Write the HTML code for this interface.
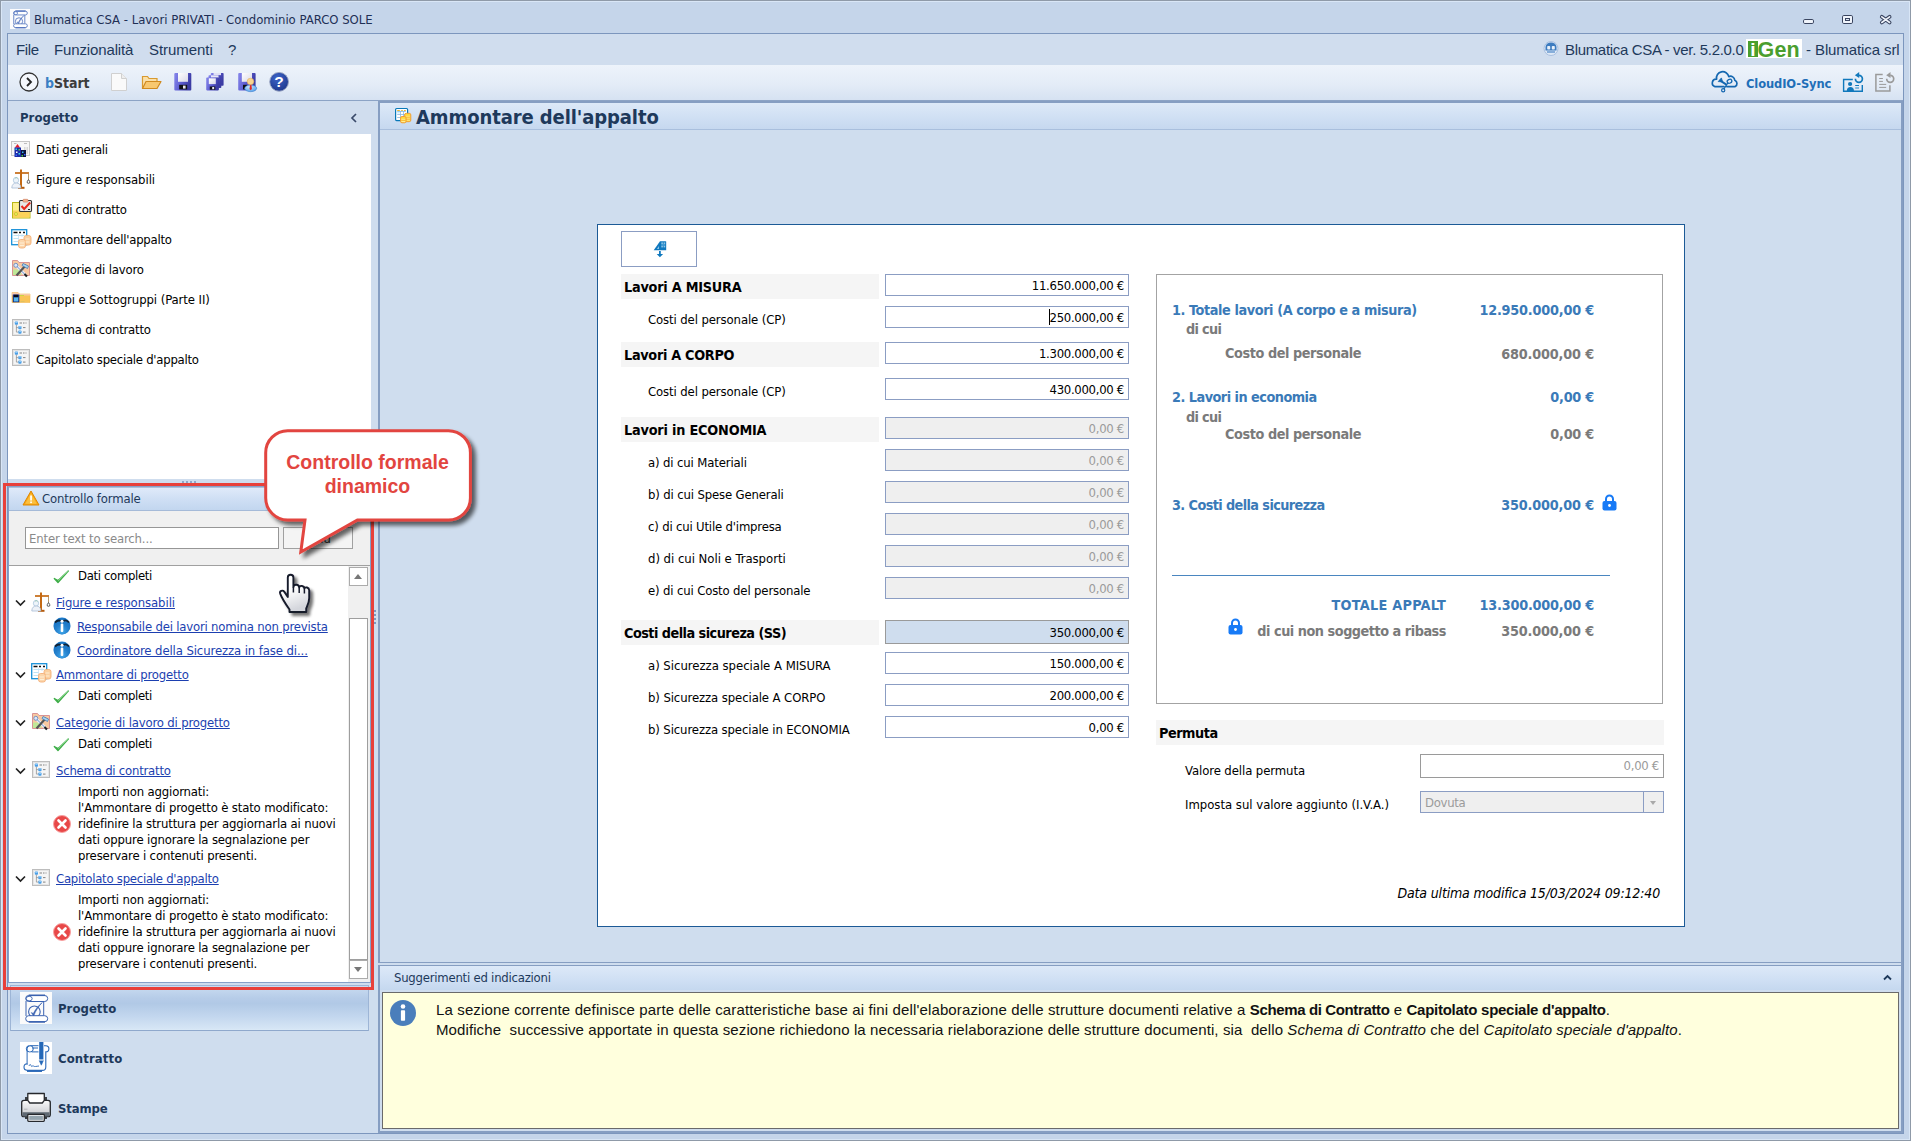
<!DOCTYPE html>
<html lang="it">
<head>
<meta charset="utf-8">
<title>Blumatica CSA - Lavori PRIVATI - Condominio PARCO SOLE</title>
<style>
*{box-sizing:border-box;margin:0;padding:0}
svg{overflow:visible}
html,body{width:1911px;height:1141px;overflow:hidden}
body{position:relative;background:#c5d5ea;font-family:"DejaVu Sans Condensed","Liberation Sans",sans-serif;font-size:13px;color:#000;line-height:16px}
.a{position:absolute}
.t{position:absolute;white-space:nowrap;line-height:16px;margin-top:1px}
.navy{color:#1e395b}
.b{font-weight:bold}
/* window */
#win{left:0;top:0;width:1911px;height:1141px;border:1px solid #8f9aa8;background:#c5d5ea;box-shadow:inset 0 0 0 1px #d9e6f6}
#frame{left:7px;top:33px;width:1897px;height:1101px;border:1px solid #7c96bd;background:#cfddee}
#menubar{left:8px;top:34px;width:1895px;height:31px;background:#d0ddee}
#toolbar{left:8px;top:65px;width:1895px;height:35px;background:linear-gradient(#edf3fb,#e4ecf7 55%,#d6e2f2)}
#tbline{left:8px;top:100px;width:1895px;height:1px;background:#8ca3c5}
.menu{font-family:"Liberation Sans","DejaVu Sans",sans-serif;font-size:15px;color:#1e395b;line-height:18px}
/* left */
#lhead{left:8px;top:101px;width:363px;height:33px;background:#d0ddee}
#llist{left:8px;top:134px;width:363px;height:345px;background:#fff}
.li{position:absolute;left:36px;white-space:nowrap;line-height:16px;margin-top:1px}
/* main */
#mainborder{left:378px;top:101px;width:1525px;height:862px;border:1px solid #869ec2;border-top-width:2px;border-left-width:2px;border-right-width:2px;background:#cfddee}
#mhead{left:380px;top:103px;width:1521px;height:27px;background:linear-gradient(#dde9f8,#cfdff3 60%,#c6d8ef);border-bottom:1px solid #a9bfdd}
#form{left:597px;top:224px;width:1088px;height:703px;background:#fff;border:1px solid #1c5a96}
.lb{position:absolute;background:#f5f5f5;height:25px}
.inp{position:absolute;left:885px;width:244px;height:22px;border:1px solid #8b9dc3;background:#fff;text-align:right;padding-right:4px;line-height:21px;font-size:13px;letter-spacing:-0.3px;white-space:nowrap}
.inp.dis{background:#efefef;color:#9b9b9b}
.hl{font-family:"DejaVu Sans Condensed","Liberation Sans",sans-serif;font-weight:bold;font-size:14.3px;left:624px}
.sl{left:648px}
.sum{font-family:"DejaVu Sans Condensed","Liberation Sans",sans-serif;font-weight:bold;font-size:14.3px;line-height:18px;margin-top:0}
.blue{color:#3a7ab8}
.gr{color:#7a7a7a}
.r{text-align:right}
.nv{font-size:13px}
.hn{font-family:"Liberation Sans","DejaVu Sans",sans-serif;font-size:15px;line-height:20px;color:#111}
/* tree */
.lnk{color:#1c3fb0;text-decoration:underline}
</style>
</head>
<body>
<div class="a" id="win"></div>
<div class="a" id="frame"></div>
<div class="a" id="menubar"></div>
<div class="a" id="toolbar"></div>
<div class="a" id="tbline"></div>

<!-- TITLEBAR -->
<div id="titlebar">
<div class="t" style="left:34px;top:11px;color:#1e2f55;letter-spacing:-0.010px/*f*/">Blumatica CSA - Lavori PRIVATI - Condominio PARCO SOLE</div>
</div>

<!-- MENUBAR -->
<div id="menus">
<div class="t menu" style="left:16px;top:40px;letter-spacing:-0.343px/*f*/">File</div>
<div class="t menu" style="left:54px;top:40px;letter-spacing:-0.133px/*f*/">Funzionalità</div>
<div class="t menu" style="left:149px;top:40px;letter-spacing:-0.056px/*f*/">Strumenti</div>
<div class="t menu" style="left:228px;top:40px;letter-spacing:-1.744px/*f*/">?</div>
</div>

<!-- TOOLBAR -->
<div id="tools">
<!-- title icon -->
<div class="a" style="left:10px;top:9px;width:20px;height:20px;background:#fbfbfd"></div>
<svg class="a" style="left:10px;top:9px" width="20" height="20" viewBox="20 992 32 32" fill="none" stroke="#5878c0" stroke-width="1.400"><path d="M26 1001v15M43.700 1001.500v14"/><circle cx="34.400" cy="1011.800" r="5.800"/><rect x="25.700" y="995.500" width="22" height="6" rx="3" fill="#fff"/><path d="M28.700 995.300h16.300" stroke-width="2.200"/><ellipse cx="29.200" cy="998.600" rx="3" ry="2.300" stroke-width="1.200"/><rect x="25.700" y="1015.700" width="22" height="6" rx="3" fill="#fff"/><path d="M28.700 1021.900h16.300" stroke-width="2.200"/><path d="M31.300 1012.600l2.300 3.400c2-5 5-10 8.700-13.500c-4 3-7 7-9 11z" fill="#5878c0" stroke-width="0.800"/></svg>
<!-- window buttons -->
<div class="a" style="left:1803px;top:19px;width:11px;height:5px;border:1.300px solid #3a4560;border-radius:1.800px;background:#f0f4fb"></div>
<div class="a" style="left:1842px;top:15px;width:11px;height:9px;border:1.300px solid #3a4560;border-radius:1.800px;background:#f0f4fb"></div>
<div class="a" style="left:1845px;top:18px;width:5px;height:3px;border:1px solid #3a4560;background:#dfe7f4"></div>
<svg class="a" style="left:1879px;top:14px" width="14" height="12" viewBox="1879 14 14 12"><path d="M1881.800 16.800l7.800 5.700M1889.600 16.800l-7.800 5.700" stroke="#3a4560" stroke-width="3.800" stroke-linecap="round"/><path d="M1881.800 16.800l7.800 5.700M1889.600 16.800l-7.800 5.700" stroke="#f0f4fb" stroke-width="1.600" stroke-linecap="round"/></svg>
<!-- right of menubar -->
<svg class="a" style="left:1543px;top:41px" width="16" height="15" viewBox="0 0 16 15"><circle cx="8" cy="7.500" r="7" fill="#dfe9f6" stroke="#a9c0e0"/><path d="M2.500 6a5.500 4.500 0 0 1 11 0v3.500h-11z" fill="#3d7cc0"/><rect x="4.200" y="5" width="3" height="3.500" rx="0.800" fill="#e8f0fa"/><rect x="8.800" y="5" width="3" height="3.500" rx="0.800" fill="#e8f0fa"/><path d="M4 11h8" stroke="#6a9ad0" stroke-width="1.500"/></svg>
<div class="t menu" style="left:1565px;top:40px;letter-spacing:-0.328px/*f*/">Blumatica CSA - ver. 5.2.0.0</div>
<div class="a" style="left:1746px;top:39px;width:56px;height:19px;background:#fff"></div>
<div class="a" style="left:1748px;top:41px;width:9.500px;height:16px;background:#4a9e2e"></div>
<div class="t" style="left:1750.300px;top:38px;margin-top:0;font-family:'Liberation Sans',sans-serif;font-weight:bold;font-size:19px;line-height:24px;color:#fff">i</div>
<div class="t" style="left:1757.500px;top:38px;margin-top:0;font-family:'Liberation Sans',sans-serif;font-weight:bold;font-size:21.500px;line-height:24px;color:#4a9e2e;letter-spacing:0.2px">Gen</div>
<div class="t menu" style="left:1806px;top:40px;letter-spacing:-0.095px/*f*/">- Blumatica srl</div>
<!-- toolbar left -->
<svg class="a" style="left:19px;top:72px" width="20" height="20" viewBox="0 0 20 20"><circle cx="10" cy="10" r="9" fill="#f4f7fc" stroke="#333" stroke-width="1.300"/><path d="M8 6l4 4-4 4" fill="none" stroke="#222" stroke-width="1.800"/></svg>
<div class="t b" style="left:45px;top:72px;font-size:14px;line-height:20px;color:#3c3c3c;letter-spacing:-0.05px"><span style="color:#3a7fc4">b</span>Start</div>
<svg class="a" style="left:110px;top:72px" width="18" height="20" viewBox="0 0 18 20"><path d="M1.500 1.500h10l5 5v12h-15z" fill="#fafafa" stroke="#d0d0d0"/><path d="M11.500 1.500v5h5" fill="#eee" stroke="#d0d0d0"/></svg>
<svg class="a" style="left:141px;top:73px" width="21" height="18" viewBox="0 0 21 18"><path d="M1.500 15.500V3.500h5l1.500 2h8v3" fill="#fbe0a8" stroke="#d89a30" stroke-width="1.200"/><path d="M1.500 15.500l3.500-7h15l-4 7z" fill="#f8c870" stroke="#d08a20" stroke-width="1.200" stroke-linejoin="round"/></svg>

<svg class="a" style="left:170px;top:68px" width="124" height="28" viewBox="170 68 124 28"><defs><linearGradient id="dk" x1="0" y1="0" x2="1" y2="0.300"><stop offset="0" stop-color="#8888ec"/><stop offset="0.550" stop-color="#5c5cd0"/><stop offset="1" stop-color="#3c3ca4"/></linearGradient><linearGradient id="lb" x1="0" y1="0" x2="1" y2="1"><stop offset="0" stop-color="#fff"/><stop offset="1" stop-color="#d8d8e8"/></linearGradient><radialGradient id="hp" cx="0.400" cy="0.300" r="0.800"><stop offset="0" stop-color="#3c64c8"/><stop offset="1" stop-color="#1c3488"/></radialGradient><radialGradient id="pb" cx="0.400" cy="0.300" r="0.800"><stop offset="0" stop-color="#c8e8ff"/><stop offset="1" stop-color="#4898e8"/></radialGradient></defs>
<rect x="174.300" y="73" width="17" height="17.400" rx="1" fill="url(#dk)"/><rect x="178" y="73" width="10" height="8.800" fill="url(#lb)"/><rect x="179.200" y="84.800" width="8" height="4.600" fill="#101018"/><rect x="183" y="85.600" width="2.600" height="3" fill="#e8e8f0"/>
<rect x="210.800" y="73" width="12.800" height="12.800" rx="0.800" fill="url(#dk)"/><rect x="213.500" y="73" width="7.500" height="2.500" fill="#e0e0f4"/><rect x="208.500" y="75.300" width="12.800" height="12.800" rx="0.800" fill="url(#dk)"/><rect x="211" y="75.300" width="7.500" height="2.500" fill="#e8e8f8"/><rect x="206.200" y="77.600" width="12.700" height="12.800" rx="0.800" fill="url(#dk)"/><rect x="208.800" y="78.300" width="7" height="5.800" fill="url(#lb)"/><rect x="209.800" y="86.500" width="5.500" height="3.200" fill="#101018"/><rect x="212.200" y="87" width="2" height="2.200" fill="#e8e8f0"/>
<rect x="238.200" y="73" width="17.400" height="17.400" rx="1" fill="url(#dk)"/><rect x="241.800" y="73" width="10.200" height="8.800" fill="url(#lb)"/><rect x="243" y="84.800" width="4" height="4.600" fill="#101018"/><ellipse cx="250.700" cy="88.300" rx="6" ry="3.400" fill="url(#pb)" stroke="#3878c8" stroke-width="0.500"/><path d="M250 84.800h1.400l0.500 4.200-1.200 1.200-1.200-1.200z" fill="#e02828"/><circle cx="250.500" cy="81.500" r="3.300" fill="#f8d490" stroke="#e0a850" stroke-width="0.500"/>
<circle cx="279.100" cy="81.800" r="9.400" fill="url(#hp)" stroke="#98a4c0" stroke-width="0.900"/><text x="279.100" y="87.300" font-family="Liberation Sans, sans-serif" font-weight="bold" font-size="15.500" text-anchor="middle" fill="#fff">?</text></svg>
<!-- toolbar right -->
<svg class="a" style="left:1706px;top:68px" width="36" height="28" viewBox="1706 68 36 28"><g fill="none" stroke="#1467b0" stroke-linecap="round" stroke-linejoin="round"><path d="M1724 86.600H1715a3.800 3.800 0 0 1 1.600-7.400a6.200 6.200 0 0 1 12.200-2.600a4.300 4.300 0 0 1 6 3.600a3.600 3.600 0 0 1 0.400 6.400H1726.800" stroke-width="1.700"/><path d="M1720.300 80.600l5.700 3.800" stroke-width="1.900"/><ellipse cx="1729.500" cy="81.300" rx="2.400" ry="1.900" transform="rotate(-25 1729.500 81.300)" stroke-width="1.300"/><path d="M1727.800 83l-3.800 5.800" stroke-width="1.200"/><circle cx="1723.200" cy="90.200" r="1.600" stroke-width="1.200"/></g><path d="M1718.200 81.600l3.200-3.700 1.200 3.900z" fill="#1467b0" stroke="#1467b0" stroke-width="0.800" stroke-linejoin="round"/></svg>
<div class="t b" style="left:1746px;top:75px;font-family:'DejaVu Sans','Liberation Sans',sans-serif;font-size:11.500px;color:#1f6fb8;letter-spacing:-0.103px/*f*/">CloudIO-Sync</div>
<svg class="a" style="left:1840px;top:68px" width="60" height="28" viewBox="1840 68 60 28"><g fill="none" stroke="#1078bc"><path d="M1852.800 79.500H1843.600V91.300H1862.300V85" stroke-width="1.400"/><path d="M1855.200 85.500h3.800" stroke-width="1"/><path d="M1855.200 88h3.800" stroke-width="1.400" stroke="#5aa4d4"/><path d="M1858.900 75.300a3.500 3.500 0 1 1-3.500 3.500" stroke-width="1.700"/></g><g fill="#1078bc"><circle cx="1850.100" cy="84" r="2.100"/><path d="M1846.800 91.300c0-3 1.400-4.300 3.600-4.300s3.600 1.300 3.600 4.300z"/><path d="M1854.900 75.200l4.300-3.300v6.200z"/></g>
<g fill="none" stroke="#9a9a9a"><path d="M1882.700 74.600H1875.900V90.900H1889.900V85.200" stroke-width="1.500"/><path d="M1879.200 78.500h3.700M1879.200 81.400h3.700M1879.200 84.400h7M1879.200 87.400h7" stroke-width="1"/><path d="M1890.200 75.300a3.500 3.500 0 1 1-3.500 3.500" stroke-width="1.700"/></g><path d="M1886.200 75.200l4.300-3.300v6.200z" fill="#9a9a9a"/></svg>
</div>

<!-- LEFT PANEL -->
<div id="left">
<div class="a" id="lhead"></div>
<div class="t b navy" style="left:20px;top:109px;letter-spacing:0.037px/*f*/">Progetto</div>
<div class="a" id="llist"></div>
<svg width="0" height="0" style="position:absolute">
<defs>
<g id="i-dati"><rect x="0.500" y="1.500" width="18" height="14" fill="#f7f7f7" stroke="#c6c6c6"/><path d="M3 3.500h2.500M13 3.500h3" stroke="#bdbdbd"/><path d="M13.500 7v7M15 7v7M16.500 7v7" stroke="#cfcfcf" stroke-width="0.800"/><path d="M3.800 7.800L6.500 4l2.700 3.800z" fill="#e4202c"/><rect x="3.500" y="7.500" width="6.500" height="9.500" fill="#1a2ca8"/><rect x="10" y="10" width="5" height="7" fill="#0c1440"/><rect x="4.500" y="8.500" width="1.500" height="1.500" fill="#38d8e8"/><rect x="7.500" y="9" width="1.500" height="1.500" fill="#48c848"/><rect x="5" y="11.500" width="1.500" height="1.500" fill="#fff"/><rect x="7.500" y="13" width="1.500" height="1.500" fill="#38d8e8"/><rect x="4.500" y="14.500" width="1.500" height="1.500" fill="#3868ff"/><rect x="11" y="11.500" width="1.500" height="1.500" fill="#38b8f8"/><rect x="13" y="14" width="1.500" height="1.500" fill="#3868ff"/><rect x="10.500" y="15" width="1.500" height="1.500" fill="#48c848"/></g>
<g id="i-fig"><path d="M10 0.500v18" stroke="#c46a14" stroke-width="2"/><path d="M4 4h14" stroke="#c46a14" stroke-width="1.700"/><path d="M7 18.800h6.500" stroke="#b45a0c" stroke-width="2"/><path d="M17.500 5v5.500" stroke="#b09060" stroke-width="0.900"/><path d="M16.300 12.500a1.300 1.300 0 1 0 2.400 0l-1.200-2z" fill="none" stroke="#444" stroke-width="0.900"/><ellipse cx="5" cy="11.300" rx="2.600" ry="3" fill="#eef4fa" stroke="#a8c4dc" stroke-width="0.800"/><path d="M0.800 19c0-3.500 2-5 4.500-5s4.500 1.500 4.500 5z" fill="#eef2f8" stroke="#a8bcd4" stroke-width="0.800"/><path d="M4 9.500c1-1 2-1 2.500 0" stroke="#98c8a8" stroke-width="0.800" fill="none"/></g>
<g id="i-contr"><rect x="1.500" y="3.500" width="17.500" height="15.500" fill="#fff08a" stroke="#b8b818"/><rect x="2" y="11.500" width="16.500" height="7" fill="#fbd25a"/><circle cx="5" cy="15" r="1.600" fill="#e8e858" stroke="#b8c020" stroke-width="0.600"/><rect x="8.500" y="1.500" width="12" height="11" rx="1" fill="#e8e8e8" stroke="#333" stroke-width="1.100"/><rect x="12" y="0.300" width="5" height="2.800" rx="0.800" fill="#f4b090" stroke="#c87858" stroke-width="0.600"/><path d="M10.500 7l2.700 3 6-6.500" stroke="#e8281c" stroke-width="2" fill="none"/><path d="M17 10.500h2" stroke="#222" stroke-width="1.200"/></g>
<g id="i-amm"><rect x="0.700" y="0.700" width="15" height="15" fill="#fff" stroke="#1890d8" stroke-width="1.300"/><path d="M2.500 3.500h4M8 3.500h2M12 3.500h2" stroke="#111" stroke-width="1.500"/><path d="M2.500 6.500h11M2.500 9.500h5M2.500 12.500h5" stroke="#bfe4f4" stroke-width="1.200"/><path d="M7.500 5v9M11 5v3" stroke="#c8dcf0" stroke-width="0.700"/><rect x="13" y="6.500" width="7" height="9.500" rx="2.200" fill="#fbd0a0" stroke="#f4b078" stroke-width="0.900"/><rect x="7.500" y="10.500" width="7" height="8.500" rx="2.200" fill="#fcd6ac" stroke="#f4b078" stroke-width="0.900"/><path d="M14.500 10h4M14.500 13h4M9 14h4M9 16.500h4" stroke="#fff0d8" stroke-width="0.900"/></g>
<g id="i-cat"><path d="M1.500 1.500h5l1.500 2H18.500v13H1.500z" fill="#f8c8a0" stroke="#d89494"/><path d="M2 10.500h8v5.500H2z" fill="#c0e898"/><path d="M5 6.500l10 10" stroke="#e8eef8" stroke-width="3"/><path d="M5 6.500l10 10" stroke="#7090c0" stroke-width="1"/><path d="M15 6L5.500 16.500" stroke="#555" stroke-width="2.200"/><path d="M12 4.500l5.500 2.500-1 2.500-5.500-3z" fill="#a8d8f0" stroke="#4878b8" stroke-width="0.800"/><circle cx="4.800" cy="6.300" r="2" fill="#dce8f8" stroke="#6888c0" stroke-width="0.900"/><path d="M13.500 15l2.500 2.500" stroke="#222" stroke-width="2.200"/></g>
<g id="i-grp"><path d="M1 3.500h6l1.500 1.500H19v8.500H1z" fill="#f9c458" stroke="#f4b850" stroke-width="0.600"/><path d="M1 3.500h6l1.500 1.500H19v1.500H1z" fill="#f8c8a8"/><path d="M8 6.500h5" stroke="#c8d840" stroke-width="1"/><rect x="1.800" y="5.500" width="6.500" height="7.800" fill="#122a80"/><rect x="2.800" y="8" width="4.500" height="4.500" fill="#58b8f0"/><rect x="3" y="5.800" width="4" height="2.500" fill="#050818"/><path d="M9.500 12.500h4" stroke="#d8c060" stroke-width="0.800"/></g>
<g id="i-sch"><rect x="0.500" y="0.500" width="17" height="16" fill="#f5f5f5" stroke="#bdbdbd"/><rect x="1.500" y="1.500" width="15" height="14" fill="none" stroke="#e4e4e4"/><rect x="2.800" y="2.500" width="3.200" height="3.200" rx="0.800" fill="#4aa0e8"/><rect x="6.300" y="7" width="3.200" height="3.200" rx="0.800" fill="#4aa0e8"/><rect x="6.300" y="11.500" width="3.200" height="3.200" rx="0.800" fill="#4aa0e8"/><path d="M4.400 5.700v7.400h1.900M4.400 8.600h1.900" stroke="#888" fill="none" stroke-width="0.700"/><path d="M7.500 4h2.500M11 4h1.500M13.500 4h1M11 8.600h2.500M11 13.100h2.500" stroke="#777" stroke-width="0.900"/><path d="M3.300 3.300h2.200M6.800 7.800h2.200M6.800 12.300h2.200" stroke="#b8e0ff" stroke-width="0.800"/></g>
<g id="i-ok"><path d="M2.300 10.500l3.700 4L16.300 3c-4 3.500-7.500 7-10.300 9.500z" fill="#3fae49" stroke="#3fae49" stroke-width="1.300" stroke-linejoin="round"/><path d="M6.200 12.800C9 9.500 12.500 6 16 3.300" fill="none" stroke="#a6e4a6" stroke-width="0.700"/></g>
<g id="i-info"><circle cx="9" cy="9" r="8.500" fill="#1a78c8"/><circle cx="9" cy="9" r="8.500" fill="url(#gInfo)"/><path d="M2 5.500c2-2 4-2.500 6-1.500M10 4c2-1 4.500-0.500 6 1.500" stroke="#123" stroke-width="1.800" fill="none"/><rect x="7.700" y="6.500" width="2.600" height="8.500" rx="1" fill="#fff"/><circle cx="9" cy="4.300" r="1.500" fill="#fff"/></g>
<g id="i-err"><circle cx="9" cy="9" r="8.500" fill="#e84848" stroke="#f8a0a0" stroke-width="1"/><path d="M5.500 5.500l7 7M12.500 5.500l-7 7" stroke="#fff" stroke-width="2.600" stroke-linecap="round"/></g>
<g id="i-chev"><path d="M1 1.500l4.500 4.500 4.500-4.500" fill="none" stroke="#222" stroke-width="1.700"/></g>
</defs>
<radialGradient id="gInfo" cx="0.5" cy="0.800" r="0.700"><stop offset="0" stop-color="#48b0f0"/><stop offset="1" stop-color="#1868b8" stop-opacity="0"/></radialGradient>
</svg>
<svg class="a" style="left:11px;top:140px" width="20" height="19"><use href="#i-dati"/></svg>
<div class="li" style="top:141px;letter-spacing:-0.280px/*f*/">Dati generali</div>
<svg class="a" style="left:11px;top:169px" width="20" height="19"><use href="#i-fig"/></svg>
<div class="li" style="top:171px;letter-spacing:-0.070px/*f*/">Figure e responsabili</div>
<svg class="a" style="left:11px;top:199px" width="20" height="19"><use href="#i-contr"/></svg>
<div class="li" style="top:201px;letter-spacing:-0.311px/*f*/">Dati di contratto</div>
<svg class="a" style="left:11px;top:229px" width="20" height="19"><use href="#i-amm"/></svg>
<div class="li" style="top:231px;letter-spacing:-0.243px/*f*/">Ammontare dell'appalto</div>
<svg class="a" style="left:11px;top:259px" width="20" height="19"><use href="#i-cat"/></svg>
<div class="li" style="top:261px;letter-spacing:-0.180px/*f*/">Categorie di lavoro</div>
<svg class="a" style="left:11px;top:289px" width="20" height="19"><use href="#i-grp"/></svg>
<div class="li" style="top:291px;letter-spacing:-0.082px/*f*/">Gruppi e Sottogruppi (Parte II)</div>
<svg class="a" style="left:12px;top:319px" width="18" height="18"><use href="#i-sch"/></svg>
<div class="li" style="top:321px;letter-spacing:-0.227px/*f*/">Schema di contratto</div>
<svg class="a" style="left:12px;top:349px" width="18" height="18"><use href="#i-sch"/></svg>
<div class="li" style="top:351px;letter-spacing:-0.257px/*f*/">Capitolato speciale d'appalto</div>
<svg class="a" style="left:350px;top:112.500px" width="8" height="10" viewBox="0 0 8 10"><path d="M6 1L2 5l4 4" fill="none" stroke="#3a4a6a" stroke-width="1.700"/></svg>
<!-- splitter dots -->
<div class="a" style="left:182px;top:481px;width:16px;height:2px;background:repeating-linear-gradient(90deg,#8fa6c8 0 2px,transparent 2px 4px)"></div>
</div>

<!-- MAIN PANEL -->
<div id="main">
<div class="a" id="mainborder"></div>
<div class="a" id="mhead"></div>
<div class="t b navy" style="left:416px;top:102.5px;font-size:20px;line-height:26px;letter-spacing:-0.095px/*f*/">Ammontare dell'appalto</div>
<svg class="a" style="left:392px;top:105px" width="24" height="22" viewBox="392 105 24 22"><rect x="395.600" y="108.500" width="12" height="12.100" rx="1" fill="#fff" stroke="#0878b8" stroke-width="1.200"/><path d="M397.200 110.500h2.600M401.200 110.500h1.600M404 110.500h1.800" stroke="#f8b820" stroke-width="1"/><path d="M397.200 111.400h8.600" stroke="#58a8e8" stroke-width="0.700"/><path d="M397.200 114.500h8.600M397.200 117.500h8.600M400.500 111v6.500M403.500 111v6.500" stroke="#8ab8e0" stroke-width="0.800" fill="none"/><path d="M397.200 112.800h2.600" stroke="#c8ecfc" stroke-width="1.400"/><rect x="404.600" y="113.300" width="6.200" height="8.400" rx="1.600" fill="#ffd83a" stroke="#f09830" stroke-width="0.900"/><path d="M405.500 116.300h4.400M405.500 118.200h4.400M405.500 120.200h4.400" stroke="#fff4a8" stroke-width="0.700"/><path d="M405.400 117.200h4.600M405.400 119.200h4.600" stroke="#f4a840" stroke-width="0.600"/><rect x="400.500" y="116.500" width="5.600" height="6.300" rx="1.500" fill="#ffd83a" stroke="#f09830" stroke-width="0.900"/><path d="M401.400 119.300h3.800M401.400 121.500h3.800" stroke="#fff4a8" stroke-width="0.800"/><path d="M401.300 120.400h4" stroke="#f4a840" stroke-width="0.600"/></svg>
<div class="a" id="form"></div>
</div>

<!-- FORM -->
<div id="formc">
<div class="a" style="left:621px;top:231px;width:76px;height:36px;border:1px solid #8b9dc3;background:#fff"></div>
<svg class="a" style="left:652px;top:239px" width="16" height="20" viewBox="652 239 16 20"><path d="M653.700 250.200L660 241.200H665.600Q666.200 241.200 666.200 241.800V250.200Z" fill="#0f78be"/><rect x="661.300" y="242.400" width="1.600" height="1.800" fill="#8cc4e6"/><rect x="663.600" y="242.400" width="1.600" height="1.800" fill="#8cc4e6"/><rect x="661.300" y="245.600" width="1.600" height="1.800" fill="#8cc4e6"/><rect x="663.600" y="245.600" width="1.600" height="1.800" fill="#8cc4e6"/><rect x="661.300" y="244.200" width="3.900" height="1.400" fill="#4aa0d4"/><path d="M657 248.900L658.900 246v2.900z" fill="#9ccdea"/><path d="M659 251h1.800v3h2.300l-3.200 3.300-3.200-3.300H659z" fill="#0f78be"/></svg>

<div class="lb" style="left:621px;top:274px;width:258px"></div>
<div class="t hl" style="top:278px;letter-spacing:-0.227px/*f*/">Lavori A MISURA</div>
<div class="inp" style="top:274px">11.650.000,00 €</div>
<div class="t sl" style="top:311px;letter-spacing:-0.110px/*f*/">Costi del personale (CP)</div>
<div class="inp" style="top:306px">250.000,00 €</div>
<div class="a" style="left:1049px;top:309px;width:1px;height:16px;background:#000"></div>

<div class="lb" style="left:621px;top:342px;width:258px"></div>
<div class="t hl" style="top:346px;letter-spacing:-0.299px/*f*/">Lavori A CORPO</div>
<div class="inp" style="top:342px">1.300.000,00 €</div>
<div class="t sl" style="top:383px;letter-spacing:-0.110px/*f*/">Costi del personale (CP)</div>
<div class="inp" style="top:378px">430.000,00 €</div>

<div class="lb" style="left:621px;top:417px;width:258px"></div>
<div class="t hl" style="top:421px;letter-spacing:-0.187px/*f*/">Lavori in ECONOMIA</div>
<div class="inp dis" style="top:417px">0,00 €</div>
<div class="t sl" style="top:454px;letter-spacing:-0.137px/*f*/">a) di cui Materiali</div>
<div class="inp dis" style="top:449px">0,00 €</div>
<div class="t sl" style="top:486px;letter-spacing:-0.151px/*f*/">b) di cui Spese Generali</div>
<div class="inp dis" style="top:481px">0,00 €</div>
<div class="t sl" style="top:518px;letter-spacing:-0.182px/*f*/">c) di cui Utile d'impresa</div>
<div class="inp dis" style="top:513px">0,00 €</div>
<div class="t sl" style="top:550px;letter-spacing:-0.029px/*f*/">d) di cui Noli e Trasporti</div>
<div class="inp dis" style="top:545px">0,00 €</div>
<div class="t sl" style="top:582px;letter-spacing:-0.153px/*f*/">e) di cui Costo del personale</div>
<div class="inp dis" style="top:577px">0,00 €</div>

<div class="lb" style="left:621px;top:620px;width:258px"></div>
<div class="t hl" style="top:624px;letter-spacing:-0.522px/*f*/">Costi della sicureza (SS)</div>
<div class="inp" style="top:620px;height:24px;background:#cfddee;border-color:#9a9a9a;line-height:24px">350.000,00 €</div>
<div class="t sl" style="top:657px;letter-spacing:-0.027px/*f*/">a) Sicurezza speciale A MISURA</div>
<div class="inp" style="top:652px">150.000,00 €</div>
<div class="t sl" style="top:689px;letter-spacing:-0.103px/*f*/">b) Sicurezza speciale A CORPO</div>
<div class="inp" style="top:684px">200.000,00 €</div>
<div class="t sl" style="top:721px;letter-spacing:-0.117px/*f*/">b) Sicurezza speciale in ECONOMIA</div>
<div class="inp" style="top:716px">0,00 €</div>

<!-- summary box -->
<div class="a" style="left:1156px;top:274px;width:507px;height:430px;border:1px solid #a3a3a3;background:#fff"></div>
<div class="t sum blue" style="left:1172px;top:301px;letter-spacing:-0.400px/*f*/">1. Totale lavori (A corpo e a misura)</div>
<div class="t sum blue r" style="right:317px;top:301px;letter-spacing:-0.200px/*f*/">12.950.000,00 €</div>
<div class="t sum gr" style="left:1186px;top:320px;letter-spacing:-0.680px/*f*/">di cui</div>
<div class="t sum gr" style="left:1225px;top:344px;letter-spacing:-0.419px/*f*/">Costo del personale</div>
<div class="t sum gr r" style="right:317px;top:345px;letter-spacing:-0.166px/*f*/">680.000,00 €</div>
<div class="t sum blue" style="left:1172px;top:388px;letter-spacing:-0.507px/*f*/">2. Lavori in economia</div>
<div class="t sum blue r" style="right:317px;top:388px;letter-spacing:-0.245px/*f*/">0,00 €</div>
<div class="t sum gr" style="left:1186px;top:408px;letter-spacing:-0.680px/*f*/">di cui</div>
<div class="t sum gr" style="left:1225px;top:425px;letter-spacing:-0.419px/*f*/">Costo del personale</div>
<div class="t sum gr r" style="right:317px;top:425px;letter-spacing:-0.245px/*f*/">0,00 €</div>
<div class="t sum blue" style="left:1172px;top:496px;letter-spacing:-0.589px/*f*/">3. Costi della sicurezza</div>
<div class="t sum blue r" style="right:317px;top:496px;letter-spacing:-0.166px/*f*/">350.000,00 €</div>
<svg class="a" style="left:1602px;top:494px" width="15" height="17" viewBox="0 0 15 17"><path d="M4 7.5V5a3.5 3.5 0 0 1 7 0v2.500" fill="none" stroke="#177af6" stroke-width="2"/><rect x="0.500" y="7" width="14" height="9.500" rx="2" fill="#177af6"/><circle cx="7.500" cy="11.500" r="1.400" fill="#fff"/></svg>
<div class="a" style="left:1172px;top:575px;width:438px;height:1px;background:#4a86c0"></div>
<div class="t sum blue r" style="right:465px;top:596px;letter-spacing:0.281px/*f*/">TOTALE APPALT</div>
<div class="t sum blue r" style="right:317px;top:596px;letter-spacing:-0.206px/*f*/">13.300.000,00 €</div>
<svg class="a" style="left:1228px;top:618px" width="15" height="17" viewBox="0 0 15 17"><path d="M4 7.5V5a3.5 3.5 0 0 1 7 0v2.500" fill="none" stroke="#177af6" stroke-width="2"/><rect x="0.500" y="7" width="14" height="9.500" rx="2" fill="#177af6"/><circle cx="7.500" cy="11.500" r="1.400" fill="#fff"/></svg>
<div class="t sum gr r" style="right:465px;top:622px;letter-spacing:-0.466px/*f*/">di cui non soggetto a ribass</div>
<div class="t sum gr r" style="right:317px;top:622px;letter-spacing:-0.166px/*f*/">350.000,00 €</div>

<!-- permuta -->
<div class="lb" style="left:1156px;top:720px;width:508px"></div>
<div class="t hl" style="left:1159px;top:724px;letter-spacing:-0.470px/*f*/">Permuta</div>
<div class="t" style="left:1185px;top:762px;letter-spacing:-0.088px/*f*/">Valore della permuta</div>
<div class="inp" style="left:1420px;top:754px;height:24px;border-color:#9a9a9a;color:#9b9b9b;line-height:22px">0,00 €</div>
<div class="t" style="left:1185px;top:796px;letter-spacing:-0.018px/*f*/">Imposta sul valore aggiunto (I.V.A.)</div>
<div class="inp dis" style="left:1420px;top:791px;text-align:left;padding-left:4px">Dovuta</div>
<div class="a" style="left:1643px;top:792px;width:1px;height:20px;background:#8b9dc3"></div>
<div class="a" style="left:1650px;top:801px;width:0;height:0;border-left:3.5px solid transparent;border-right:3.5px solid transparent;border-top:4px solid #a9a9a9"></div>
<div class="t r" style="right:251px;top:884px;font-style:italic;font-size:14px;letter-spacing:-0.167px/*f*/">Data ultima modifica 15/03/2024 09:12:40</div>
</div>

<!-- BOTTOM HINT -->
<div id="hint">
<div class="a" style="left:378px;top:965px;width:1525px;height:168px;border:1px solid #869ec2;border-left-width:2px;border-right-width:2px;border-bottom-width:2px;background:#cfddee"></div>
<div class="a" style="left:1901px;top:101px;width:2px;height:1032px;background:#869ec2"></div>
<div class="a" style="left:380px;top:966px;width:1521px;height:24px;background:linear-gradient(#dde9f8,#d0e0f4 55%,#c5d8ef)"></div>
<div class="t navy" style="left:394px;top:969px;letter-spacing:-0.233px/*f*/">Suggerimenti ed indicazioni</div>
<svg class="a" style="left:1883px;top:974px" width="9" height="7" viewBox="0 0 9 7"><path d="M1 5.500L4.500 2 8 5.500" fill="none" stroke="#1e395b" stroke-width="1.800"/></svg>
<div class="a" style="left:382px;top:992px;width:1517px;height:137px;border:1px solid #6a6a6a;background:#ffffdd"></div>
<svg class="a" style="left:390px;top:1000px" width="26" height="26" viewBox="0 0 26 26"><circle cx="13" cy="13" r="13" fill="#4a7ebb"/><circle cx="13" cy="6.500" r="2.300" fill="#fff"/><rect x="10.900" y="10.200" width="4.200" height="10.600" rx="0.800" fill="#fff"/></svg>
<div class="t hn" style="left:436px;top:999px;letter-spacing:0.136px">La sezione corrente definisce parte delle caratteristiche base ai fini dell'elaborazione delle strutture documenti relative a <b style="letter-spacing:-0.37px">Schema di Contratto</b> e <b style="letter-spacing:-0.27px">Capitolato speciale d'appalto</b>.</div>
<div class="t hn" style="left:436px;top:1019px;letter-spacing:0.098px">Modifiche&nbsp; successive apportate in questa sezione richiedono la necessaria rielaborazione delle strutture documenti, sia&nbsp; dello <i>Schema di Contratto</i> che del <i>Capitolato speciale d'appalto</i>.</div>
</div>

<!-- CONTROLLO FORMALE -->
<div id="cf">
<div class="a" style="left:8px;top:487px;width:363px;height:24px;background:linear-gradient(#dfeafa,#cfdff4 50%,#c2d6ef);border-top:1px solid #aebfd9;border-bottom:1px solid #a5bad8"></div>
<svg class="a" style="left:22px;top:490px" width="18" height="16" viewBox="0 0 18 16"><path d="M9 1L17 15H1z" fill="#f8a818" stroke="#e08800" stroke-linejoin="round"/><path d="M9 3.500L14.800 13.800H3.200z" fill="#fcc040"/><rect x="8.200" y="5.500" width="1.700" height="5" fill="#fff"/><rect x="8.200" y="11.500" width="1.700" height="1.600" fill="#fff"/></svg>
<div class="t" style="left:42px;top:490px;color:#1e395b;letter-spacing:-0.154px/*f*/">Controllo formale</div>
<div class="a" style="left:8px;top:511px;width:363px;height:54px;background:#f0f0f0"></div>
<div class="a" style="left:25px;top:527px;width:254px;height:22px;border:1px solid #969696;background:#fff"></div>
<div class="t" style="left:29px;top:530px;color:#8a8a8a;letter-spacing:-0.165px/*f*/">Enter text to search...</div>
<div class="a" style="left:283px;top:527px;width:70px;height:22px;border:1px solid #a0a0a0;background:#f4f4f4"></div>
<div class="t" style="left:307px;top:530px;color:#333">Find</div>
<div class="a" style="left:8px;top:565px;width:363px;height:417px;background:#fff;border-top:1px solid #a0a0a0"></div>
<!-- scrollbar -->
<div class="a" style="left:348px;top:566px;width:22px;height:416px;background:#f0f0f0"></div>
<div class="a" style="left:349px;top:567px;width:19px;height:19px;border:1px solid #ababab;background:#fff"></div>
<div class="a" style="left:354px;top:574px;width:0;height:0;border-left:4.500px solid transparent;border-right:4.500px solid transparent;border-bottom:5px solid #777"></div>
<div class="a" style="left:349px;top:618px;width:19px;height:342px;border:1px solid #9e9e9e;background:#fff"></div>
<div class="a" style="left:349px;top:960px;width:19px;height:19px;border:1px solid #ababab;background:#fff"></div>
<div class="a" style="left:354px;top:967px;width:0;height:0;border-left:4.500px solid transparent;border-right:4.500px solid transparent;border-top:5px solid #777"></div>
<div class="a" style="left:8px;top:486px;width:363px;height:497px;border:1px solid #86a0c8"></div>
<!-- tree rows -->
<svg class="a" style="left:52px;top:568px" width="18" height="17"><use href="#i-ok"/></svg>
<div class="t" style="left:78px;top:567px;letter-spacing:-0.347px/*f*/">Dati completi</div>

<svg class="a" style="left:15px;top:599px" width="11" height="8"><use href="#i-chev"/></svg>
<svg class="a" style="left:31px;top:592px" width="20" height="19"><use href="#i-fig"/></svg>
<div class="t lnk" style="left:56px;top:594px;letter-spacing:-0.070px/*f*/">Figure e responsabili</div>
<svg class="a" style="left:53px;top:617px" width="18" height="18"><use href="#i-info"/></svg>
<div class="t lnk" style="left:77px;top:618px;letter-spacing:-0.194px/*f*/">Responsabile dei lavori nomina non prevista</div>
<svg class="a" style="left:53px;top:641px" width="18" height="18"><use href="#i-info"/></svg>
<div class="t lnk" style="left:77px;top:642px;letter-spacing:-0.109px/*f*/">Coordinatore della Sicurezza in fase di...</div>

<svg class="a" style="left:15px;top:671px" width="11" height="8"><use href="#i-chev"/></svg>
<svg class="a" style="left:31px;top:663px" width="20" height="19"><use href="#i-amm"/></svg>
<div class="t lnk" style="left:56px;top:666px;letter-spacing:-0.204px/*f*/">Ammontare di progetto</div>
<svg class="a" style="left:52px;top:688px" width="18" height="17"><use href="#i-ok"/></svg>
<div class="t" style="left:78px;top:687px;letter-spacing:-0.347px/*f*/">Dati completi</div>

<svg class="a" style="left:15px;top:719px" width="11" height="8"><use href="#i-chev"/></svg>
<svg class="a" style="left:31px;top:712px" width="20" height="19"><use href="#i-cat"/></svg>
<div class="t lnk" style="left:56px;top:714px;letter-spacing:-0.180px/*f*/">Categorie di lavoro di progetto</div>
<svg class="a" style="left:52px;top:736px" width="18" height="17"><use href="#i-ok"/></svg>
<div class="t" style="left:78px;top:735px;letter-spacing:-0.347px/*f*/">Dati completi</div>

<svg class="a" style="left:15px;top:767px" width="11" height="8"><use href="#i-chev"/></svg>
<svg class="a" style="left:32px;top:761px" width="18" height="18"><use href="#i-sch"/></svg>
<div class="t lnk" style="left:56px;top:762px;letter-spacing:-0.227px/*f*/">Schema di contratto</div>
<svg class="a" style="left:53px;top:815px" width="18" height="18"><use href="#i-err"/></svg>
<div class="t" style="left:78px;top:783px;letter-spacing:-0.162px">Importi non aggiornati:<br>l'Ammontare di progetto è stato modificato:<br>ridefinire la struttura per aggiornarla ai nuovi<br>dati oppure ignorare la segnalazione per<br>preservare i contenuti presenti.</div>

<svg class="a" style="left:15px;top:875px" width="11" height="8"><use href="#i-chev"/></svg>
<svg class="a" style="left:32px;top:869px" width="18" height="18"><use href="#i-sch"/></svg>
<div class="t lnk" style="left:56px;top:870px;letter-spacing:-0.257px/*f*/">Capitolato speciale d'appalto</div>
<svg class="a" style="left:53px;top:923px" width="18" height="18"><use href="#i-err"/></svg>
<div class="t" style="left:78px;top:891px;letter-spacing:-0.162px">Importi non aggiornati:<br>l'Ammontare di progetto è stato modificato:<br>ridefinire la struttura per aggiornarla ai nuovi<br>dati oppure ignorare la segnalazione per<br>preservare i contenuti presenti.</div>
</div>

<!-- NAV -->
<div id="nav">
<div class="a" style="left:10px;top:985px;width:359px;height:46px;border:1px solid #9db5d6;border-bottom-color:#8fa8cc;background:linear-gradient(#c9dcf1,#b6cce8 28%,#b1c9e6 40%,#c2d6ee 68%,#d5e5f5 96%,#dae9f7)"></div>
<div class="a" style="left:20px;top:992px;width:32px;height:32px;background:#fbfbfb"></div>
<svg class="a" style="left:20px;top:992px" width="32" height="32" viewBox="20 992 32 32" fill="none" stroke="#3a62b0" stroke-width="1"><path d="M26 1001v15M43.700 1001.500v14"/><circle cx="34.400" cy="1011.800" r="5.800" stroke-width="1.100"/><rect x="25.700" y="995.500" width="22" height="6" rx="3" fill="#fff"/><path d="M28.700 995.300h16.300" stroke-width="1.600"/><ellipse cx="29.200" cy="998.600" rx="3" ry="2.300" stroke-width="0.900"/><rect x="25.700" y="1015.700" width="22" height="6" rx="3" fill="#fff"/><path d="M28.700 1021.900h16.300" stroke-width="1.600"/><path d="M31.300 1012.600l2.300 3.400c2-5 5-10 8.700-13.500c-4 3-7 7-9 11z" fill="#3a62b0" stroke-width="0.600"/></svg>
<div class="t b navy nv" style="left:58px;top:1000px;letter-spacing:0.037px/*f*/">Progetto</div>

<div class="a" style="left:20px;top:1042px;width:32px;height:32px;background:#fff"></div>
<svg class="a" style="left:20px;top:1042px" width="32" height="32" viewBox="20 1042 32 32" fill="none" stroke="#2a68b8" stroke-width="1"><path d="M38.500 1045.700H30.200a3.100 3.100 0 0 0-3.100 3.100V1064.800"/><path d="M30.200 1045.700a3 3 0 0 1 0 6.200h-0.800a3 3 0 0 1 0-6.200M32 1048h6M31.500 1051.900H38.500"/><path d="M44 1045.700h1.800a3 3 0 0 1 0 6.200v15a3.500 3.500 0 0 1-3.500 3.500H27.300a3.300 3.300 0 0 1 0-6.600" stroke-width="1.100"/><path d="M27 1071.200h15" stroke-width="1.500"/><path d="M29 1066c1-2.500 1.800-1.500 2.200 0s1.500-1 2.300 0 3 0.300 5.500 0" stroke-width="0.900"/><rect x="39.200" y="1042" width="4.200" height="17.600" fill="#2468b8" stroke="none"/><path d="M39.200 1060.600h4.200l-2.100 4.600z" fill="#2468b8" stroke="#2468b8" stroke-width="0.600"/><path d="M39.200 1060.100h4.200" stroke="#fff" stroke-width="0.700"/></svg>
<div class="t b navy nv" style="left:58px;top:1050px;letter-spacing:0.098px/*f*/">Contratto</div>

<svg class="a" style="left:20px;top:1092px" width="32" height="32" viewBox="20 1092 32 32"><defs><linearGradient id="pg" x1="0" y1="0" x2="0" y2="1"><stop offset="0" stop-color="#fafafa"/><stop offset="0.550" stop-color="#dcdde0"/><stop offset="1" stop-color="#c4c6ca"/></linearGradient></defs><rect x="25" y="1097" width="22" height="5" fill="#3a3e44"/><rect x="25" y="1112" width="22" height="7" fill="#3a3e44"/><rect x="21.700" y="1100.400" width="28.600" height="16.200" rx="2.200" fill="url(#pg)" stroke="#26282c" stroke-width="1.300"/><path d="M22.400 1112.300h27.200v2.800a1.300 1.300 0 0 1-1.300 1.300H23.700a1.300 1.300 0 0 1-1.300-1.300z" fill="#5e6872"/><path d="M27.800 1100.400V1093.500H44.300V1100.400L42.300 1103H29.800z" fill="#fff" stroke="#26282c" stroke-width="1.300" stroke-linejoin="round"/><rect x="27.800" y="1114.300" width="16.500" height="7" rx="0.800" fill="#fff" stroke="#26282c" stroke-width="1.300"/><rect x="29.200" y="1115.700" width="13.700" height="4.200" fill="#94a4ae"/><path d="M24 1109.200h3.500" stroke="#b4b6ba" stroke-width="1"/></svg>
<div class="t b navy nv" style="left:58px;top:1100px;letter-spacing:-0.151px/*f*/">Stampe</div>
</div>

<!-- CALLOUT -->
<div id="callout">
<div class="a" style="left:374px;top:610px;width:2px;height:16px;background:repeating-linear-gradient(180deg,#7d98c0 0 2px,transparent 2px 4px)"></div>
<!-- red highlight rect -->
<div class="a" style="left:3px;top:483px;width:371px;height:507px;border:3px solid #e8403a"></div>
<svg class="a" style="left:250px;top:420px;overflow:visible" width="240" height="150" viewBox="250 420 240 150">
<defs><filter id="sh" x="-10%" y="-10%" width="130%" height="130%"><feGaussianBlur in="SourceAlpha" stdDeviation="2.200"/><feOffset dx="3.500" dy="3.500"/><feComponentTransfer><feFuncA type="linear" slope="0.600"/></feComponentTransfer><feMerge><feMergeNode/><feMergeNode in="SourceGraphic"/></feMerge></filter></defs>
<path filter="url(#sh)" d="M287.700 430.700H448.400a22 22 0 0 1 22 22V498a22 22 0 0 1-22 22H357.400L300.800 552l4.200-32H287.700a22 22 0 0 1-22-22V452.700a22 22 0 0 1 22-22z" fill="#fff" stroke="#e2453f" stroke-width="3" stroke-linejoin="miter"/>
<text x="367.500" y="469" text-anchor="middle" font-family="Liberation Sans, sans-serif" font-weight="bold" font-size="19.500" fill="#e2453f">Controllo formale</text>
<text x="367.500" y="493" text-anchor="middle" font-family="Liberation Sans, sans-serif" font-weight="bold" font-size="19.500" fill="#e2453f">dinamico</text>
</svg>
<!-- hand cursor -->
<svg class="a" style="left:270px;top:565px;overflow:visible" width="50" height="56" viewBox="270 565 50 56">
<defs><filter id="sh2" x="-30%" y="-20%" width="170%" height="150%"><feGaussianBlur in="SourceAlpha" stdDeviation="1.800"/><feOffset dx="2.500" dy="2.500"/><feComponentTransfer><feFuncA type="linear" slope="0.550"/></feComponentTransfer><feMerge><feMergeNode/><feMergeNode in="SourceGraphic"/></feMerge></filter><linearGradient id="hg" x1="0" y1="0" x2="0.300" y2="1"><stop offset="0.450" stop-color="#fff"/><stop offset="1" stop-color="#d4d6dc"/></linearGradient></defs>
<path filter="url(#sh2)" d="M287.800 597L284.200 591.600C282.800 589.800 279.200 590.600 280.200 593.600C282 598.500 286 604.500 289.500 609.500V612H306.200V608.500C307.500 605.500 309.200 602.500 309.200 598V590.300C309 587.300 305.200 586.500 304.400 588.500C304.200 585.500 299.700 585 299.200 587.500C298.900 584 293.900 584 293.400 587V577.500A2.800 2.800 0 0 0 287.800 577.500Z" fill="url(#hg)" stroke="#161a2c" stroke-width="1.900" stroke-linejoin="round"/>
<path d="M293.400 587v5.500M299.200 587.500v5.500M304.400 588.500v5" stroke="#161a2c" stroke-width="1.500" fill="none"/>
</svg>
</div>
</body>
</html>
